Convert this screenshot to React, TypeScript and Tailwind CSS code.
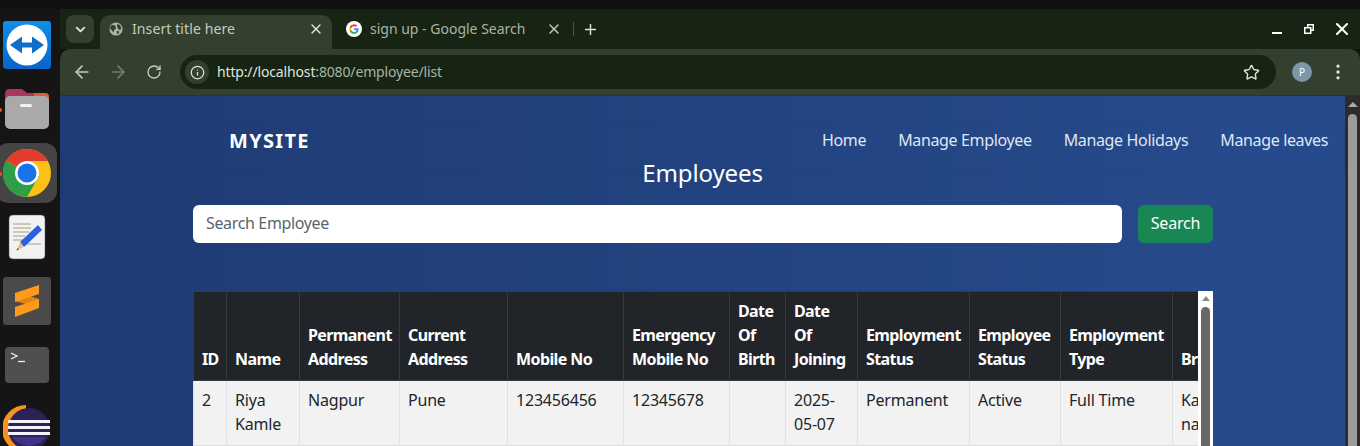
import { ArrowLeft, ArrowRight, ChevronDown, Info, MoreVertical, Plus, RotateCw, Star, X } from "lucide-react";

const font = "font-['Noto_Sans',sans-serif]";

const columns = [
  { w: "w-[33px]", title: "ID", value: "2" },
  { w: "w-[73px]", title: "Name", value: "Riya Kamle" },
  { w: "w-[100px]", title: "Permanent Address", value: "Nagpur" },
  { w: "w-[108px]", title: "Current Address", value: "Pune" },
  { w: "w-[116px]", title: "Mobile No", value: "123456456" },
  { w: "w-[106px]", title: "Emergency Mobile No", value: "12345678" },
  { w: "w-[56px]", title: "Date Of Birth", value: "" },
  { w: "w-[72px]", title: "Date Of Joining", value: "2025-05-07" },
  { w: "w-[112px]", title: "Employment Status", value: "Permanent" },
  { w: "w-[91px]", title: "Employee Status", value: "Active" },
  { w: "w-[112px]", title: "Employment Type", value: "Full Time" },
  { w: "w-[90px]", title: "Branch", value: "Kalyan nagar" },
];

function TeamViewer() {
  return (
    <svg width="48" height="48" viewBox="0 0 48 48">
      <defs>
        <linearGradient id="tv" x1="0" y1="0" x2="0" y2="1">
          <stop offset="0" stopColor="#0e8ee9" />
          <stop offset="1" stopColor="#0a64c8" />
        </linearGradient>
      </defs>
      <rect width="48" height="48" rx="3" fill="url(#tv)" />
      <circle cx="24" cy="24" r="20.500" fill="#fff" />
      <path d="M7 24l12-8.500v6h10v-6L41 24l-12 8.500v-6H19v6z" fill="#0e6fc8" />
    </svg>
  );
}

function Files() {
  return (
    <svg width="46" height="42" viewBox="0 0 46 42">
      <path d="M1 6q0-5 5-5h12l5 4h18q4 0 4 4v12H1z" fill="#a8385f" />
      <path d="M30 5h11q4 0 4 4v10H30z" fill="#d9622f" />
      <rect x="1" y="8" width="44" height="33" rx="5" fill="#a9a9a9" />
      <rect x="16" y="16" width="12" height="3" rx="1.500" fill="#f2f2f2" />
    </svg>
  );
}

function Chrome() {
  return (
    <svg width="48" height="48" viewBox="0 0 48 48">
      <circle cx="24" cy="24" r="24" fill="#fbc116" />
      <path d="M24 24L3.200 12A24 24 0 0 1 44.800 12H24z" fill="#e33b2e" />
      <path d="M24 24L3.200 12A24 24 0 0 0 24 48L36 27z" fill="#2f9e48" />
      <circle cx="24" cy="24" r="12" fill="#fff" />
      <circle cx="24" cy="24" r="9.500" fill="#1a73e8" />
    </svg>
  );
}

function Editor() {
  return (
    <svg width="38" height="46" viewBox="0 0 38 46">
      <rect x="1" y="1" width="36" height="44" rx="4" fill="#f2f2f2" stroke="#555" strokeWidth="0.5" />
      <path d="M5 10h18M5 14h18M5 18h16M5 22h12M5 26h10M14 30h19" stroke="#cbc7bb" strokeWidth="2" />
      <path d="M12 28L30 11l4 5-18 17z" fill="#2f5fd8" />
      <path d="M12 28l4 5-7 3z" fill="#f2b98a" />
      <path d="M9.500 34l1.500 1.500-2.500 1z" fill="#444" />
    </svg>
  );
}

function Sublime() {
  return (
    <svg width="48" height="48" viewBox="0 0 48 48">
      <rect width="48" height="48" rx="3" fill="#4a4a4a" />
      <path d="M12 24L36 31V22L20 17z" fill="#e0860f" />
      <path d="M36 8v9L12 25v-9z" fill="#ff9a1f" />
      <path d="M36 22v9L12 40v-10z" fill="#ff9a1f" />
    </svg>
  );
}

function Terminal() {
  return (
    <svg width="44" height="36" viewBox="0 0 44 36">
      <rect width="44" height="36" rx="4" fill="#4f4f4f" />
      <path d="M6 6l6 3-6 3" stroke="#f2f2f2" strokeWidth="1.300" fill="none" />
      <path d="M13 14.500h7" stroke="#f2f2f2" strokeWidth="1.300" />
    </svg>
  );
}

function Eclipse() {
  return (
    <svg width="48" height="48" viewBox="0 0 48 48">
      <path d="M23 0A24 24 0 0 0 23 48z" fill="#f6931e" />
      <circle cx="26" cy="24" r="21" fill="#2c2255" />
      <path d="M5 15h42v3H5zM5 21h42v3H5zM5 27h42v3H5z" fill="#f4f1fa" />
      <path d="M9 32h34a21 21 0 0 1-34 0z" fill="#40318a" />
    </svg>
  );
}

function GoogleIcon() {
  return (
    <svg width="16" height="16" viewBox="0 0 48 48">
      <circle cx="24" cy="24" r="24" fill="#fff" />
      <path d="M38 24.500c0-1-.1-2-.3-3H24v5.700h7.800a6.700 6.700 0 0 1-2.900 4.400v3.600h4.700c2.700-2.500 4.400-6.200 4.400-10.700z" fill="#4285f4" />
      <path d="M24 39c3.900 0 7.200-1.300 9.600-3.500l-4.700-3.600c-1.300.9-3 1.400-4.900 1.400-3.800 0-7-2.500-8.100-6h-4.800v3.700A14.500 14.500 0 0 0 24 39z" fill="#34a853" />
      <path d="M15.900 27.300a8.700 8.700 0 0 1 0-5.600V18h-4.800a14.500 14.500 0 0 0 0 13z" fill="#fbbc05" />
      <path d="M24 15.800c2.100 0 4 .7 5.500 2.100l4.100-4.100A14.500 14.500 0 0 0 11.100 18l4.800 3.700c1.100-3.400 4.300-5.900 8.100-5.900z" fill="#ea4335" />
    </svg>
  );
}

function Globe() {
  return (
    <svg width="14" height="14" viewBox="0 0 16 16">
      <circle cx="8" cy="8" r="7.500" fill="#aab3a6" />
      <path d="M3 3l4 1 1 3-2 2-1 3-2-3-2-2zM10 2l3 2 1 4-2 1-2-2-1-3zM9 10l3 1-2 3-1-1z" fill="#333f2f" />
    </svg>
  );
}

function Dock() {
  const items = [<TeamViewer />, <Files />, <Chrome />, <Editor />, <Sublime />, <Terminal />, <Eclipse />];
  return (
    <aside className="flex w-[60px] shrink-0 flex-col bg-[#151515] pt-1">
      {items.map((icon, i) => (
        <div key={i} className="relative flex h-16 w-[54px] shrink-0 items-center justify-center">
          {i === 2 && <div className="absolute -left-1 top-[2px] h-[60px] w-[61px] rounded-xl bg-[#444]" />}
          {(i === 1 || i === 2) && <div className="absolute left-0 top-[31px] h-1 w-0.5 rounded-r bg-[#e9541f]" />}
          <div className="relative flex">{icon}</div>
        </div>
      ))}
    </aside>
  );
}

function TabStrip() {
  return (
    <div className="flex h-10 items-end bg-[#172414] pl-1.5 text-sm text-[#c3cdbf]">
      <div className="mb-1.5 flex h-7 w-7 items-center justify-center rounded-lg bg-[#333f2f]">
        <ChevronDown size={15} strokeWidth={3} className="text-[#dfe5dc]" />
      </div>
      <div className="ml-1.5 flex h-[34px] w-[232px] items-center rounded-t-[10px] bg-[#333f2f] pb-1.5 pl-[9px] pr-2">
        <Globe />
        <span className="ml-[9px] flex-1 tracking-[0.1px]">Insert title here</span>
        <X size={16} strokeWidth={2} className="text-[#dfe5dc]" />
      </div>
      <div className="flex h-[34px] w-[241px] items-center pb-1.5 pl-[14px] pr-[11px]">
        <GoogleIcon />
        <span className="ml-2 flex-1 text-[#a9b4a4]">sign up - Google Search</span>
        <X size={16} strokeWidth={2} className="text-[#c3cdbf]" />
      </div>
      <div className="mb-[13px] h-[14px] w-px bg-[#4a5646]" />
      <div className="mb-[11px] ml-2 flex">
        <Plus size={17} strokeWidth={2} className="text-[#dfe5dc]" />
      </div>
      <div className="ml-auto mb-[10px] flex items-center pr-2 text-white">
        <div className="mr-[22px] mt-2 h-0.5 w-[10px] bg-white" />
        <svg width="10" height="10" viewBox="0 0 10 10" className="mr-[18px]">
          <path fillRule="evenodd" d="M3 0h7v7H7.500v3H0V3h3zM4.500 1.500V3h3v2.500H8.500v-4zM1.500 4.500V8.500H6v-4z" fill="#fff" />
        </svg>
        <X size={20} strokeWidth={2.5} />
      </div>
    </div>
  );
}

function Toolbar() {
  return (
    <div className="flex h-[46px] items-center rounded-t-[10px] bg-[#333f2f] pl-3 pr-3">
      <ArrowLeft size={20} strokeWidth={2} className="text-[#c3cdbf]" />
      <ArrowRight size={20} strokeWidth={2} className="ml-4 text-[#75806f]" />
      <RotateCw size={16} strokeWidth={2} className="ml-[18px] text-[#c3cdbf]" />
      <div className="ml-[18px] flex h-[34px] w-[1096px] items-center rounded-full bg-[#172414] pl-[5px] pr-4">
        <div className="flex h-6 w-6 items-center justify-center rounded-full bg-[#333f2f]">
          <Info size={15} strokeWidth={2} className="text-[#dfe5dc]" />
        </div>
        <span className="ml-2 flex-1 pb-px text-sm tracking-[-0.15px] text-[#dfe5dc]">
          http://localhost<span className="text-[#a9b4a4]">:8080/employee/list</span>
        </span>
        <Star size={17} strokeWidth={2} className="text-[#dfe5dc]" />
      </div>
      <div className="ml-4 flex h-5 w-5 items-center justify-center rounded-full bg-[#7b97a8] text-[10px] text-white">
        P
      </div>
      <MoreVertical size={20} strokeWidth={2} className="ml-4 text-[#dfe5dc]" />
    </div>
  );
}

function Page() {
  return (
    <div className="flex min-h-0 flex-1 border-t border-[#2a3527]">
      <main className="flex min-w-0 flex-1 flex-col bg-gradient-to-r from-[#1f3b73] to-[#264b8d] text-white">
        <nav className="ml-[85px] mt-[25px] flex h-[49px] shrink-0 items-center justify-between border border-black/[0.05] pb-3 pl-[83px] pr-[16px]">
          <span className="mt-[2px] text-xl font-bold tracking-[1.300px]">MYSITE</span>
          <div className="flex gap-8 tracking-[-0.35px] text-[#dfe6f2]">
            <span>Home</span>
            <span>Manage Employee</span>
            <span>Manage Holidays</span>
            <span>Manage leaves</span>
          </div>
        </nav>
        <h1 className="-mt-3 text-center text-2xl leading-[29px] tracking-[-0.1px]">Employees</h1>
        <div className="ml-[133px] mt-[18px] flex w-[1020px] gap-4">
          <div className="flex h-[38px] flex-1 items-center rounded-md bg-white pb-0.5 pl-[13px] tracking-[-0.35px] text-[#5c636a]">Search Employee</div>
          <div className="flex h-[38px] w-[75px] items-center justify-center rounded-md bg-[#198754] pb-0.5 tracking-[-0.2px]">Search</div>
        </div>
        <div className="ml-[133px] mt-12 flex w-[1020px] min-h-0 flex-1">
          <div className="min-w-0 flex-1 overflow-hidden">
            <table className="w-[1069px] table-fixed border-collapse">
              <thead>
                <tr className="bg-[#212529] text-white">
                  {columns.map((c) => (
                    <th key={c.title} className={`${c.w} h-[89px] border border-[#373b3e] pb-[9px] pl-2 pr-2 text-left align-bottom font-bold leading-6 tracking-[-0.6px]`}>
                      {c.title}
                    </th>
                  ))}
                </tr>
              </thead>
              <tbody>
                <tr className="bg-[#f2f2f2] text-[#212529]">
                  {columns.map((c) => (
                    <td key={c.title} className="border border-[#dee2e6] px-2 pt-[7px] pb-[9px] align-top leading-6 tracking-[-0.2px]">
                      {c.value}
                    </td>
                  ))}
                </tr>
              </tbody>
            </table>
          </div>
          <div className="flex w-[15px] shrink-0 flex-col items-center bg-white pt-[5px]">
            <div className="h-0 w-0 border-x-[4.500px] border-b-[5px] border-x-transparent border-b-[#8a8a8a]" />
            <div className="mt-[6px] w-[9px] flex-1 rounded-t-full bg-[#686868]" />
          </div>
        </div>
      </main>
      <div className="flex w-[15px] shrink-0 flex-col items-center bg-[#2c2c2c] pt-1.5">
        <div className="h-0 w-0 border-x-[5px] border-b-[5px] border-x-transparent border-b-[#aaa]" />
        <div className="mt-[7px] w-[9px] flex-1 rounded-t-full bg-[#9c9c9c]" />
      </div>
    </div>
  );
}

export default function App() {
  return (
    <div className={`flex h-screen flex-col overflow-hidden bg-[#111] ${font}`}>
      <div className="h-[9px] shrink-0 bg-[#111]" />
      <div className="flex min-h-0 flex-1">
        <Dock />
        <div className="flex min-w-0 flex-1 flex-col">
          <TabStrip />
          <Toolbar />
          <Page />
        </div>
      </div>
    </div>
  );
}
